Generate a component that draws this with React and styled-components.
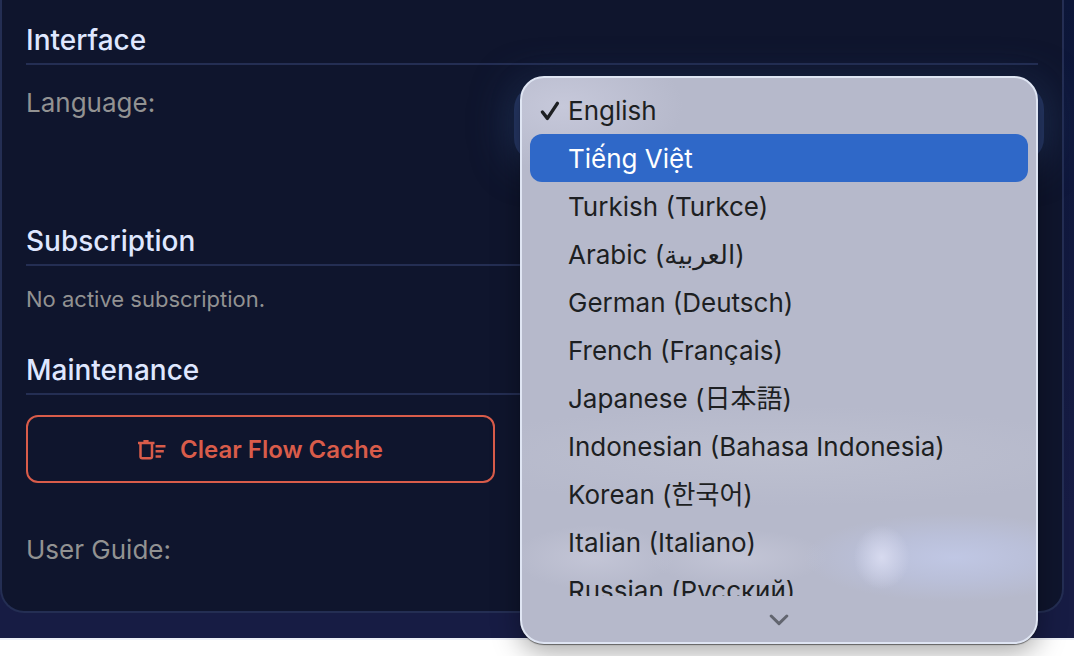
import { useState } from 'react';
import styled, { createGlobalStyle } from 'styled-components';

const languages = [
  { code: 'en', label: 'English' },
  { code: 'vi', label: 'Tiếng Việt' },
  { code: 'tr', label: 'Turkish (Turkce)' },
  { code: 'ar', label: 'Arabic (العربية)' },
  { code: 'de', label: 'German (Deutsch)' },
  { code: 'fr', label: 'French (Français)' },
  { code: 'ja', label: 'Japanese (日本語)' },
  { code: 'id', label: 'Indonesian (Bahasa Indonesia)' },
  { code: 'ko', label: 'Korean (한국어)' },
  { code: 'it', label: 'Italian (Italiano)' },
  { code: 'ru', label: 'Russian (Русский)' },
];

const CheckIcon = () => (
  <svg width="20" height="22" viewBox="0 0 20 22" fill="none" aria-hidden="true">
    <path
      d="M2.4 12 7.4 18.4 17.4 3.4"
      stroke="currentColor"
      strokeWidth="3.4"
      strokeLinecap="round"
      strokeLinejoin="round"
    />
  </svg>
);

const ChevronIcon = () => (
  <svg width="20" height="12" viewBox="0 0 20 12" fill="none" aria-hidden="true">
    <path
      d="M2.2 2 10 9.6 17.8 2"
      stroke="currentColor"
      strokeWidth="3"
      strokeLinecap="round"
      strokeLinejoin="round"
    />
  </svg>
);

const ClearIcon = () => (
  <svg width="28" height="20" viewBox="0 0 28 20" fill="none" aria-hidden="true">
    <path
      d="M5.4 0h5.2v1.7h5.9v2.6H0V1.7h5.4zM17.6 5h9.9v2.5h-9.9zM17.6 10h8.2v2.5h-8.2zM17.6 15.3h5.5v2.5h-5.5z"
      fill="currentColor"
    />
    <path
      d="M2.5 3v13.4q0 1.8 1.8 1.8h7.9q1.8 0 1.8-1.8V3"
      stroke="currentColor"
      strokeWidth="2.5"
    />
  </svg>
);

const LanguageMenu = ({ selected, active, onPick, onHover }) => (
  <Menu>
    <Options role="listbox" aria-label="Language options">
      {languages.map(({ code, label }) => (
        <Option
          key={code}
          type="button"
          role="option"
          aria-selected={selected === code}
          $active={active === code}
          onMouseEnter={() => onHover(code)}
          onClick={() => onPick(code)}
        >
          <Tick>{selected === code && <CheckIcon />}</Tick>
          {label}
        </Option>
      ))}
    </Options>
    <More type="button" aria-label="More languages">
      <ChevronIcon />
    </More>
  </Menu>
);

const App = () => {
  const [language, setLanguage] = useState('en');
  const [active, setActive] = useState('vi');

  return (
    <Screen>
      <GlobalStyle />
      <Page>
        <Panel>
          <Section>
            <Heading>Interface</Heading>
            <Row $tall>
              <Label htmlFor="language">Language:</Label>
              <Field>
                <Select
                  id="language"
                  value={language}
                  onChange={(e) => setLanguage(e.target.value)}
                >
                  {languages.map(({ code, label }) => (
                    <option key={code} value={code}>
                      {label}
                    </option>
                  ))}
                </Select>
                <LanguageMenu
                  selected={language}
                  active={active}
                  onPick={setLanguage}
                  onHover={setActive}
                />
              </Field>
            </Row>
          </Section>
          <Section>
            <Heading>Subscription</Heading>
            <Note>No active subscription.</Note>
          </Section>
          <Section>
            <Heading>Maintenance</Heading>
            <Row>
              <ClearButton type="button">
                <ClearIcon />
                Clear Flow Cache
              </ClearButton>
            </Row>
          </Section>
          <GuideRow>
            <Text>User Guide:</Text>
          </GuideRow>
        </Panel>
      </Page>
    </Screen>
  );
};

export default App;

const GlobalStyle = createGlobalStyle`
  * {
    box-sizing: border-box;
  }
  body {
    margin: 0;
    background: white;
    font-family: Inter, 'Noto Sans CJK JP', 'Noto Sans CJK KR', 'DejaVu Sans', sans-serif;
    font-size: 26px;
    line-height: 34px;
  }
  button,
  select {
    font: inherit;
  }
`;
const Screen = styled.div`
  min-height: 100vh;
  background: white;
  overflow: hidden;
`;
const Page = styled.main`
  padding: 0 10px 25px 0;
  background: linear-gradient(180deg, #0c1638 0%, #171c44 80%);
  border-bottom: 2px solid #eef1f8;
`;
const Panel = styled.div`
  display: flex;
  flex-direction: column;
  gap: 40px;
  padding: 22px 24px 24px;
  background: #0f152d;
  border: 2px solid #242e53;
  border-top: none;
  border-radius: 0 0 24px 24px;
`;
const Section = styled.section`
  display: flex;
  flex-direction: column;
  gap: 20px;
`;
const Heading = styled.h2`
  margin: 0;
  padding-bottom: 5px;
  border-bottom: 2px solid #242e53;
  color: #dfe7ff;
  font-size: 28px;
  font-weight: 500;
  line-height: 36px;
`;
const Row = styled.div`
  display: grid;
  grid-template-columns: 469fr 518fr;
  column-gap: 25px;
  align-items: start;
  min-height: ${({ $tall }) => ($tall ? '98px' : '0')};
`;
const GuideRow = styled(Row)`
  min-height: 64px;
  padding-top: 10px;
`;
const Label = styled.label`
  color: #929292;
  line-height: 36px;
`;
const Text = styled.span`
  color: #929292;
`;
const Note = styled.p`
  margin: 0;
  color: #929292;
  font-size: 22px;
  line-height: 26px;
`;
const Field = styled.div`
  position: relative;
`;
const Select = styled.select`
  display: block;
  width: calc(100% + 12px);
  height: 77px;
  margin: 0 -6px;
  padding: 0 24px;
  appearance: none;
  color: #dfe7ff;
  background: #253663;
  border: none;
  border-radius: 24px;
  box-shadow: 0 0 40px #22365f;
`;
const Menu = styled.div`
  position: absolute;
  top: -9px;
  left: 0;
  z-index: 1;
  width: 100%;
  padding: 8px 8px 0;
  color: #1d1f22;
  background:
    radial-gradient(28px 32px at 70% 85%, #d7daef 0%, #d7daef00 100%),
    radial-gradient(150px 44px at 84% 85%, #c0c7e4 0%, #bcc3e0b0 50%, #c0c7e400 100%),
    radial-gradient(90px 28px at 42% 85%, #c3c5d6 0%, #c3c5d600 100%),
    radial-gradient(80px 32px at 14% 85%, #c3c5d6 0%, #c3c5d600 100%),
    radial-gradient(340px 50px at 50% 67%, #bdc0d0 0%, #bdc0d000 100%),
    radial-gradient(120px 64px at 8% 5%, #c6c8da 0%, #c6c8da00 100%),
    #b6b9cb;
  border: 2px solid #dfe5f3;
  border-radius: 24px;
  box-shadow:
    0 1px 1px #00000080,
    0 8px 28px #00000059;
`;
const Options = styled.div`
  height: 510px;
  overflow: hidden;
`;
const Option = styled.button`
  display: flex;
  align-items: center;
  width: 100%;
  height: 48px;
  padding: 2px 10px 0;
  color: ${({ $active }) => ($active ? 'white' : 'inherit')};
  background: ${({ $active }) => ($active ? '#2f68c8' : 'none')};
  border: none;
  border-radius: 12px;
  text-align: left;
  white-space: nowrap;
`;
const Tick = styled.span`
  display: flex;
  flex: none;
  width: 28px;
`;
const More = styled.button`
  display: flex;
  align-items: center;
  justify-content: center;
  width: 100%;
  height: 46px;
  padding: 2px 0 0;
  color: #62656f;
  background: none;
  border: none;
`;
const ClearButton = styled.button`
  display: flex;
  align-items: center;
  justify-content: center;
  gap: 14px;
  height: 68px;
  padding: 2px 24px 0;
  color: #d95c4a;
  background: none;
  border: 2px solid #d95c4a;
  border-radius: 12px;
  font-size: 24px;
  font-weight: 600;
`;
